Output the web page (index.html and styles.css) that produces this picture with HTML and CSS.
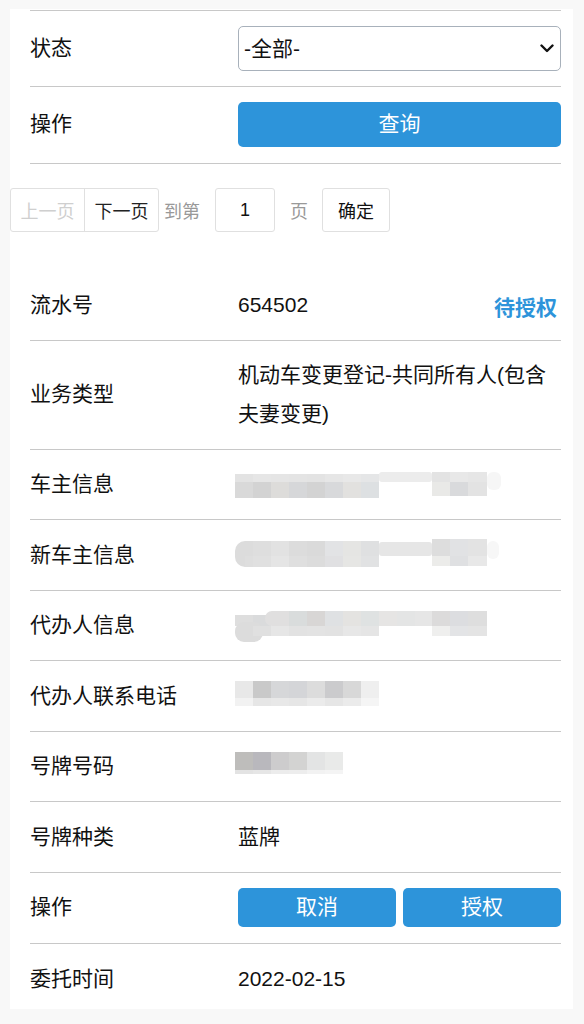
FILE: index.html
```html
<!DOCTYPE html>
<html lang="zh-CN">
<head>
<meta charset="utf-8">
<title>授权查询</title>
<link rel="stylesheet" href="styles.css">
</head>
<body>
<div class="panel">
  <div class="form">
    <div class="frow">
      <div class="label">状态</div>
      <div class="ctrl select-wrap">
        <select class="select">
          <option>-全部-</option>
        </select>
        <svg class="chev" width="14" height="9" viewBox="0 0 14 9"><path d="M1.5 1.5 L7 7 L12.5 1.5" fill="none" stroke="#111" stroke-width="2.4" stroke-linecap="round" stroke-linejoin="round"/></svg>
      </div>
    </div>
    <div class="frow frow-last">
      <div class="label">操作</div>
      <div class="ctrl"><button class="btn btn-query">查询</button></div>
    </div>
  </div>

  <div class="pager">
    <div class="pg-group">
      <span class="pg-btn pg-disabled">上一页</span>
      <span class="pg-btn pg-next">下一页</span>
    </div>
    <span class="pg-text pg-to">到第</span>
    <input class="pg-input" type="text" value="1">
    <span class="pg-text pg-page">页</span>
    <span class="pg-ok">确定</span>
  </div>

  <div class="detail">
    <div class="drow first">
      <div class="label">流水号</div>
      <div class="value value-split"><span>654502</span><span class="status">待授权</span></div>
    </div>
    <div class="drow">
      <div class="label">业务类型</div>
      <div class="value">机动车变更登记-共同所有人(包含夫妻变更)</div>
    </div>
    <div class="drow">
      <div class="label">车主信息</div>
      <div class="value">
        <svg class="mosaic" width="275" height="38" viewBox="0 0 275 38">
          <rect x="0" y="9" width="18" height="8" fill="#e3e3e3"/>
          <rect x="18" y="9" width="18" height="8" fill="#e6e6e6"/>
          <rect x="36" y="9" width="18" height="8" fill="#e5e5e5"/>
          <rect x="54" y="9" width="18" height="8" fill="#e4e4e4"/>
          <rect x="72" y="9" width="18" height="8" fill="#e3e3e3"/>
          <rect x="90" y="9" width="18" height="8" fill="#e6e6e6"/>
          <rect x="108" y="9" width="18" height="8" fill="#e8e8e8"/>
          <rect x="126" y="9" width="18" height="8" fill="#e5e6e7"/>
          <rect x="144" y="7" width="53" height="10" rx="3" fill="#ececec"/>
          <rect x="197" y="7" width="18" height="10" fill="#e3e3e3"/>
          <rect x="215" y="7" width="18" height="10" fill="#e8e8e8"/>
          <rect x="233" y="7" width="19" height="10" fill="#e6e6e6"/>
          <rect x="0" y="17" width="18" height="16" fill="#d9d9d9"/>
          <rect x="18" y="17" width="18" height="16" fill="#d3d3d3"/>
          <rect x="36" y="17" width="18" height="16" fill="#dddcda"/>
          <rect x="54" y="17" width="18" height="16" fill="#d6d7d9"/>
          <rect x="72" y="17" width="18" height="16" fill="#d3d3d3"/>
          <rect x="90" y="17" width="18" height="16" fill="#d8d9db"/>
          <rect x="108" y="17" width="18" height="16" fill="#e2e1df"/>
          <rect x="126" y="17" width="18" height="16" fill="#dde0e2"/>
          <rect x="197" y="17" width="18" height="14" fill="#e9e9e7"/>
          <rect x="215" y="17" width="18" height="14" fill="#d9dadc"/>
          <rect x="233" y="17" width="19" height="14" fill="#e3e3e3"/>
          <rect x="252" y="7" width="14" height="18" rx="6" fill="#f6f6f6"/>
        </svg>
      </div>
    </div>
    <div class="drow">
      <div class="label">新车主信息</div>
      <div class="value">
        <svg class="mosaic" width="275" height="38" viewBox="0 0 275 38">
          <rect x="0" y="5" width="24" height="26" rx="10" fill="#dcdcdc"/>
          <rect x="10" y="5" width="8" height="15" fill="#dcdcdc"/>
          <rect x="18" y="5" width="18" height="15" fill="#dedede"/>
          <rect x="36" y="5" width="18" height="15" fill="#e2e2e2"/>
          <rect x="54" y="5" width="18" height="15" fill="#dcdcdc"/>
          <rect x="72" y="5" width="18" height="15" fill="#dadada"/>
          <rect x="90" y="5" width="18" height="15" fill="#e2e3e5"/>
          <rect x="108" y="5" width="18" height="15" fill="#e5e5e3"/>
          <rect x="126" y="5" width="18" height="15" fill="#dfe0e1"/>
          <rect x="144" y="6" width="53" height="14" rx="3" fill="#e6e6e6"/>
          <rect x="197" y="3" width="18" height="17" fill="#dddddd"/>
          <rect x="215" y="3" width="18" height="17" fill="#e1e2e4"/>
          <rect x="233" y="3" width="19" height="17" fill="#e3e3e3"/>
          <rect x="10" y="20" width="8" height="11" fill="#dedede"/>
          <rect x="18" y="20" width="18" height="11" fill="#e0e0e0"/>
          <rect x="36" y="20" width="18" height="11" fill="#e5e5e5"/>
          <rect x="54" y="20" width="18" height="11" fill="#dfdfdf"/>
          <rect x="72" y="20" width="18" height="11" fill="#dcdcdc"/>
          <rect x="90" y="20" width="18" height="11" fill="#e0e0e2"/>
          <rect x="108" y="20" width="18" height="11" fill="#e6e6e4"/>
          <rect x="126" y="20" width="18" height="11" fill="#e1e2e3"/>
          <rect x="197" y="20" width="18" height="10" fill="#ececea"/>
          <rect x="215" y="20" width="18" height="10" fill="#dfe0e2"/>
          <rect x="233" y="20" width="19" height="10" fill="#e8e8e8"/>
          <rect x="252" y="5" width="12" height="18" rx="6" fill="#f7f7f7"/>
        </svg>
      </div>
    </div>
    <div class="drow">
      <div class="label">代办人信息</div>
      <div class="value">
        <svg class="mosaic" width="275" height="38" viewBox="0 0 275 38">
          <rect x="0" y="9" width="18" height="11" fill="#dedede"/>
          <rect x="18" y="9" width="18" height="11" fill="#dadbdc"/>
          <rect x="30" y="5" width="24" height="15" rx="7" fill="#e0dfdf"/>
          <rect x="40" y="5" width="14" height="15" fill="#e0dfdf"/>
          <rect x="54" y="5" width="18" height="15" fill="#d9dcdc"/>
          <rect x="72" y="5" width="18" height="15" fill="#d8d6d5"/>
          <rect x="90" y="5" width="18" height="15" fill="#dfe1e3"/>
          <rect x="108" y="5" width="18" height="15" fill="#e4e3e1"/>
          <rect x="126" y="5" width="18" height="15" fill="#dfe2e2"/>
          <rect x="144" y="5" width="18" height="15" fill="#e6e5e4"/>
          <rect x="162" y="5" width="18" height="15" fill="#e4e5e5"/>
          <rect x="180" y="5" width="17" height="15" fill="#e6e6e6"/>
          <rect x="197" y="5" width="18" height="15" fill="#dcdbdb"/>
          <rect x="215" y="5" width="18" height="15" fill="#dcdde0"/>
          <rect x="233" y="5" width="19" height="15" fill="#dedede"/>
          <rect x="0" y="16" width="28" height="20" rx="9" fill="#dcdcdc"/>
          <rect x="10" y="20" width="8" height="10" fill="#dcdcdc"/>
          <rect x="18" y="20" width="18" height="10" fill="#e0e0e0"/>
          <rect x="36" y="20" width="18" height="10" fill="#e6e6e6"/>
          <rect x="54" y="20" width="18" height="10" fill="#e2e2e2"/>
          <rect x="72" y="20" width="18" height="10" fill="#e3e3e3"/>
          <rect x="90" y="20" width="18" height="10" fill="#e2e2e2"/>
          <rect x="108" y="20" width="18" height="10" fill="#e7e7e7"/>
          <rect x="126" y="20" width="18" height="10" fill="#e5e5e5"/>
          <rect x="197" y="20" width="18" height="10" fill="#efefee"/>
          <rect x="215" y="20" width="18" height="10" fill="#e3e4e6"/>
          <rect x="233" y="20" width="19" height="10" fill="#e4e4e4"/>
        </svg>
      </div>
    </div>
    <div class="drow">
      <div class="label">代办人联系电话</div>
      <div class="value">
        <svg class="mosaic" width="275" height="38" viewBox="0 0 275 38">
          <rect x="0" y="4" width="18" height="17" fill="#e8e8e8"/>
          <rect x="18" y="4" width="18" height="17" fill="#c9c9c9"/>
          <rect x="36" y="4" width="18" height="17" fill="#d6d7d9"/>
          <rect x="54" y="4" width="18" height="17" fill="#d4d5d8"/>
          <rect x="72" y="4" width="18" height="17" fill="#dcdcdc"/>
          <rect x="90" y="4" width="18" height="17" fill="#cbcbcd"/>
          <rect x="108" y="4" width="18" height="17" fill="#d8d8d8"/>
          <rect x="126" y="4" width="18" height="17" fill="#efefef"/>
          <rect x="0" y="21" width="18" height="8" fill="#f2f2f2"/>
          <rect x="18" y="21" width="18" height="8" fill="#e6e6e6"/>
          <rect x="36" y="21" width="18" height="8" fill="#e8e8e8"/>
          <rect x="54" y="21" width="18" height="8" fill="#e6e6e6"/>
          <rect x="72" y="21" width="18" height="8" fill="#ebebeb"/>
          <rect x="90" y="21" width="18" height="8" fill="#e6e6e6"/>
          <rect x="108" y="21" width="18" height="8" fill="#ebebeb"/>
          <rect x="126" y="21" width="18" height="8" fill="#f5f5f5"/>
        </svg>
      </div>
    </div>
    <div class="drow">
      <div class="label">号牌号码</div>
      <div class="value">
        <svg class="mosaic" width="275" height="38" viewBox="0 0 275 38">
          <rect x="0" y="5" width="18" height="18" fill="#bebdbb"/>
          <rect x="18" y="5" width="18" height="18" fill="#b9b8bd"/>
          <rect x="36" y="5" width="18" height="18" fill="#cdcccd"/>
          <rect x="54" y="5" width="18" height="18" fill="#d3d3d2"/>
          <rect x="72" y="5" width="18" height="18" fill="#e3e4e4"/>
          <rect x="90" y="5" width="18" height="18" fill="#e9eae9"/>
          <rect x="0" y="23" width="18" height="4" fill="#e3e3e3"/>
          <rect x="18" y="23" width="18" height="4" fill="#e6e6e6"/>
          <rect x="36" y="23" width="18" height="4" fill="#ececec"/>
          <rect x="54" y="23" width="18" height="4" fill="#ededed"/>
          <rect x="72" y="23" width="18" height="4" fill="#f2f2f2"/>
          <rect x="90" y="23" width="18" height="4" fill="#f4f4f4"/>
        </svg>
      </div>
    </div>
    <div class="drow">
      <div class="label">号牌种类</div>
      <div class="value">蓝牌</div>
    </div>
    <div class="drow">
      <div class="label">操作</div>
      <div class="value value-btns">
        <button class="btn btn-op">取消</button>
        <button class="btn btn-op">授权</button>
      </div>
    </div>
    <div class="drow last">
      <div class="label">委托时间</div>
      <div class="value">2022-02-15</div>
    </div>
  </div>
</div>
</body>
</html>
```

FILE: styles.css
```css
* {
  box-sizing: border-box;
}

html, body {
  margin: 0;
  padding: 0;
  background: #f8f8f8;
}

body {
  font-family: "Liberation Sans", "Noto Sans CJK SC", sans-serif;
  color: #111;
  height: 1024px;
  overflow: hidden;
}

.panel {
  margin: 9px 0 0 10px;
  width: 563px;
  background: #fff;
  padding-top: 1px;
}

/* filter form */
.form {
  padding: 0 12px 0 20px;
}

.frow {
  display: grid;
  grid-template-columns: 208px 1fr;
  align-items: center;
  border-top: 1px solid #c8c8c8;
  padding: 15px 0;
}

.frow-last {
  padding-bottom: 16px;
  border-bottom: 1px solid #c8c8c8;
}

.label {
  font-size: 21px;
  line-height: 38.5px;
  color: #111;
  white-space: nowrap;
}

.ctrl {
  min-width: 0;
}

.select-wrap {
  position: relative;
}

.select {
  display: block;
  width: 100%;
  height: 45px;
  appearance: none;
  -webkit-appearance: none;
  background: #fff;
  border: 1px solid #a8b1bb;
  border-radius: 5px;
  padding: 0 30px 0 5px;
  font-family: "Liberation Sans", "Noto Sans CJK SC", sans-serif;
  font-size: 21px;
  color: #111;
  outline: none;
}

.chev {
  position: absolute;
  right: 7px;
  top: 18px;
}

.btn {
  display: block;
  border: none;
  border-radius: 5px;
  background: #2d94da;
  color: #fff;
  font-family: "Liberation Sans", "Noto Sans CJK SC", sans-serif;
  font-size: 21px;
  line-height: 1;
  padding: 0 0 3px;
  cursor: pointer;
}

.btn-query {
  width: 100%;
  height: 45px;
}

/* pager */
.pager {
  display: flex;
  align-items: center;
  margin-top: 24px;
  height: 44px;
  font-size: 18px;
}

.pg-group {
  display: flex;
  height: 44px;
  border: 1px solid #e0e0e0;
  border-radius: 3px;
}

.pg-btn {
  display: flex;
  align-items: center;
  padding: 0 9.5px;
  color: #222;
}

.pg-disabled {
  color: #cfcfcf;
}

.pg-next {
  border-left: 1px solid #e0e0e0;
}

.pg-text {
  color: #999;
}

.pg-to {
  margin: 0 15px 0 5px;
}

.pg-input {
  width: 60px;
  height: 44px;
  border: 1px solid #e0e0e0;
  border-radius: 3px;
  text-align: center;
  font-family: "Liberation Sans", "Noto Sans CJK SC", sans-serif;
  font-size: 18px;
  color: #111;
  outline: none;
  padding: 0;
}

.pg-page {
  margin: 0 14px 0 15px;
}

.pg-ok {
  display: flex;
  align-items: center;
  justify-content: center;
  width: 68px;
  height: 44px;
  border: 1px solid #e0e0e0;
  border-radius: 3px;
  color: #111;
}

/* detail */
.detail {
  margin-top: 38px;
  padding: 0 12px 0 20px;
}

.drow {
  display: grid;
  grid-template-columns: 208px 1fr;
  align-items: center;
  padding: 15.5px 0;
  border-top: 1px solid #c8c8c8;
}

.drow.first {
  border-top: none;
}

.drow.last {
  padding: 16px 0 11px;
}

.value {
  font-size: 21px;
  line-height: 38.5px;
  color: #111;
  min-width: 0;
}

.value-split {
  display: flex;
  justify-content: space-between;
  align-items: center;
}

.status {
  color: #2d94da;
  font-weight: bold;
  margin: 3px 4px -3px 0;
}

.mosaic {
  display: block;
  margin-left: -3px;
}

.value-btns {
  display: flex;
  gap: 7px;
}

.btn-op {
  flex: 1;
  height: 39px;
}
```
